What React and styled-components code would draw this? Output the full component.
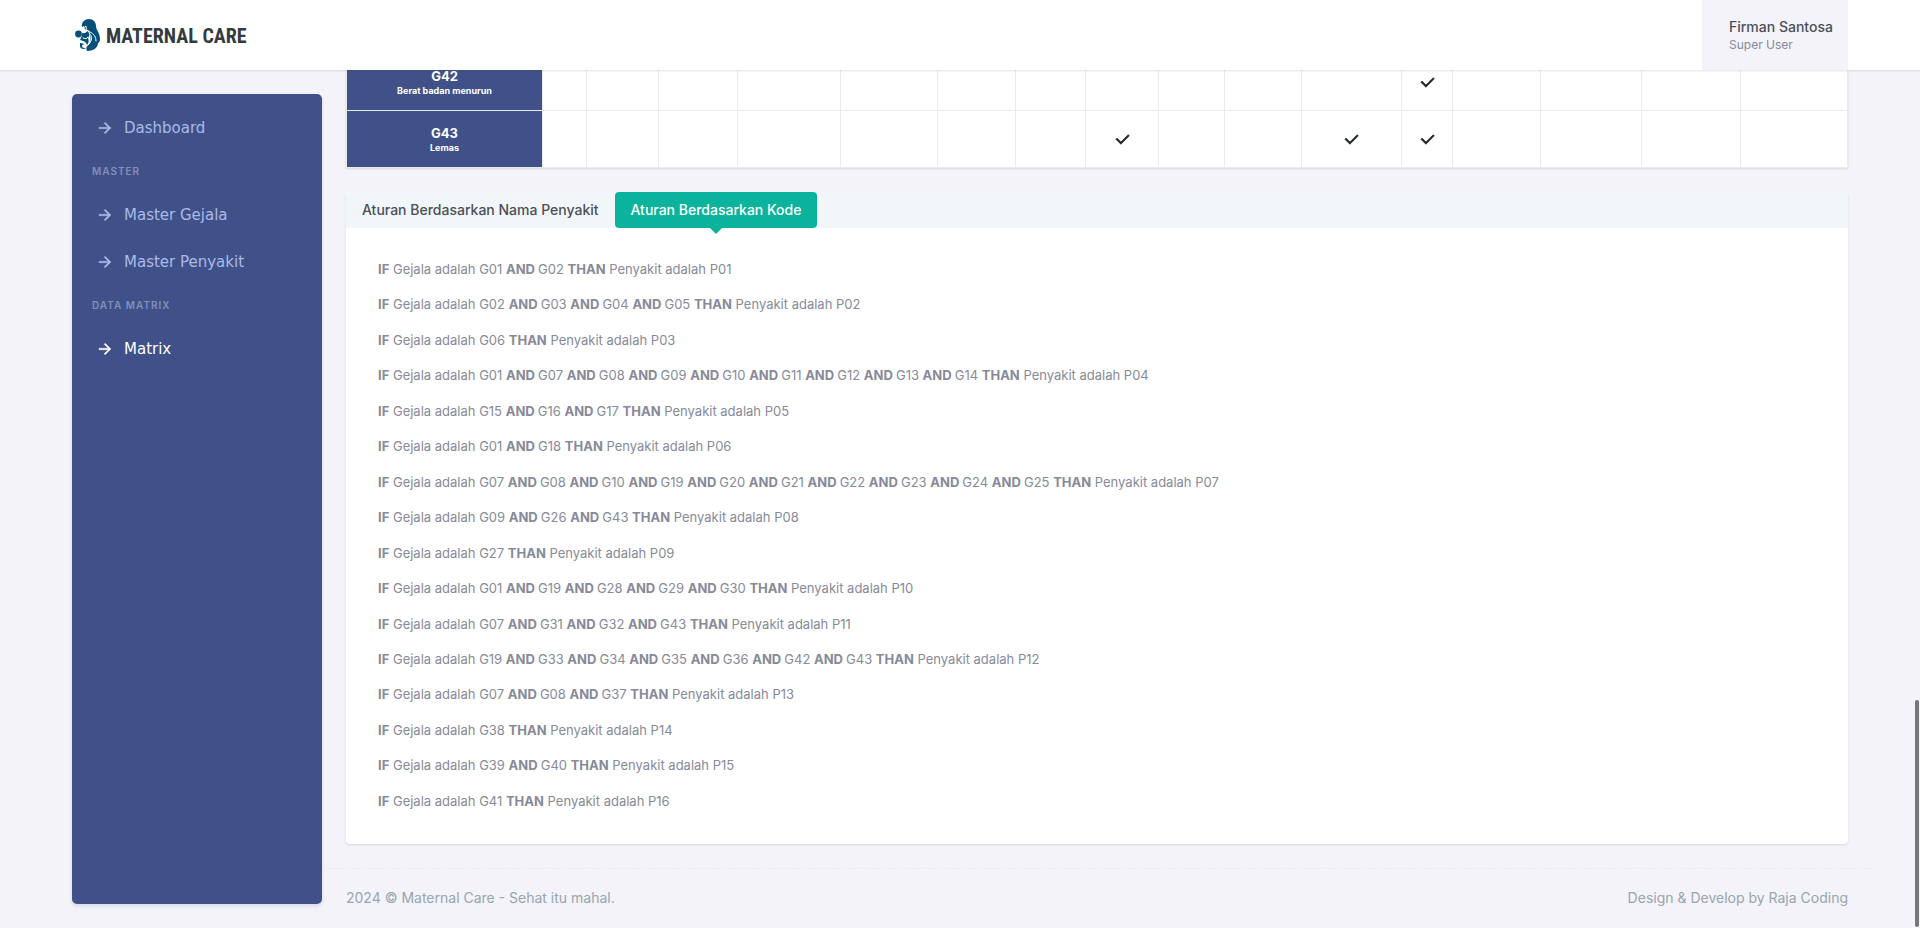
import React, { useState } from "react";
import styled, { createGlobalStyle } from "styled-components";

const GlobalStyle = createGlobalStyle`
  *, *::before, *::after { box-sizing: border-box; }
  html, body, #root { height: 100%; }
  body {
    margin: 0;
    overflow: hidden;
    background: #f3f3f9;
    color: #212529;
    font-family: Inter, "Open Sans", sans-serif;
    font-size: 13px;
    line-height: 20px;
  }
`;

const Page = styled.div`
  display: grid;
  grid-template-rows: 70px minmax(0, 1fr);
  height: 100vh;
`;

const Topbar = styled.header`
  position: relative;
  z-index: 2;
  display: flex;
  justify-content: space-between;
  padding: 0 72px;
  background: #fff;
  box-shadow: 0 1px 2px rgba(56, 65, 74, 0.15);
`;

const Brand = styled.a`
  display: flex;
  align-items: center;
  gap: 5px;
  padding: 1px 0 0 3px;
  color: #343a40;
  font-family: "Roboto Condensed", Roboto, sans-serif;
  font-size: 20px;
  font-weight: 700;
  line-height: 24px;
  text-decoration: none;
`;

const UserButton = styled.button`
  display: flex;
  flex-direction: column;
  justify-content: center;
  min-width: 146px;
  padding: 2px 15px 0 27px;
  border: 0;
  background: #f3f3f9;
  font: inherit;
  text-align: left;
`;

const UserName = styled.span`
  color: #495057;
  font-size: 14px;
  font-weight: 500;
  line-height: 18px;
`;

const UserRole = styled.span`
  color: #878a99;
  font-size: 12px;
  line-height: 18px;
`;

const Body = styled.div`
  display: grid;
  grid-template-columns: 250px minmax(0, 1fr);
  gap: 24px;
  min-height: 0;
  padding: 0 72px;
`;

const Sidebar = styled.nav`
  align-self: stretch;
  margin: 24px 0;
  padding: 10px 0;
  border-radius: 5px;
  background: #405189;
  box-shadow: 0 2px 4px rgba(15, 34, 58, 0.12);
`;

const MenuTitle = styled.h2`
  margin: 0;
  padding: 0 20px;
  color: #838fb9;
  font-size: 10px;
  font-weight: 600;
  letter-spacing: 1px;
  line-height: 40px;
  text-transform: uppercase;
`;

const MenuLink = styled.a`
  display: flex;
  align-items: center;
  gap: 10px;
  height: 47px;
  padding: 0 24px;
  color: ${(p) => (p.$active ? "#fff" : "#abb9e8")};
  font-family: "DejaVu Sans", sans-serif;
  font-size: 15px;
  text-decoration: none;
`;

const Main = styled.main`
  display: flex;
  flex-direction: column;
  min-width: 0;
`;

const TableCard = styled.section`
  height: 98px;
  display: flex;
  flex-direction: column;
  justify-content: flex-end;
  background: #fff;
  box-shadow: 0 1px 2px rgba(56, 65, 74, 0.15);
`;

const Matrix = styled.table`
  width: 100%;
  border-collapse: collapse;
  table-layout: fixed;
`;

const Code = styled.th`
  height: 57px;
  padding: 0 10px;
  border: 1px solid #e9ebec;
  background: #405189;
  color: #fff;
  font-weight: 700;
  line-height: 18px;
`;

const Symptom = styled.small`
  display: block;
  font-size: 9px;
  line-height: 12px;
`;

const Cell = styled.td`
  padding: 0;
  border: 1px solid #e9ebec;
  text-align: center;

  svg { display: block; margin: 0 auto; }
`;

const Card = styled.section`
  margin-top: 24px;
  border-radius: 4px;
  background: #fff;
  box-shadow: 0 1px 2px rgba(56, 65, 74, 0.15);
`;

const Tabs = styled.div`
  display: flex;
  background: #f3f6f9;
`;

const Tab = styled.button`
  position: relative;
  height: 36px;
  padding: 0 16px;
  border: 0;
  border-radius: 4px;
  background: ${(p) => (p.$active ? "#0ab39c" : "transparent")};
  color: ${(p) => (p.$active ? "#fff" : "#495057")};
  font: inherit;
  font-size: 14px;
  font-weight: 500;

  &::after {
    content: "";
    display: ${(p) => (p.$active ? "block" : "none")};
    position: absolute;
    top: 100%;
    left: 50%;
    margin-left: -6px;
    border: 6px solid transparent;
    border-top-color: #0ab39c;
    border-bottom: 0;
  }
`;

const Rules = styled.ul`
  display: flex;
  flex-direction: column;
  justify-content: space-between;
  min-height: 616px;
  margin: 0;
  padding: 31px 32px 33px;
  list-style: none;
  color: #878a99;
`;

const Rule = styled.li`
  line-height: 20px;
`;

const Footer = styled.footer`
  display: flex;
  justify-content: space-between;
  margin: 24px -24px 0;
  padding: 19px 24px 18px;
  border-top: 1px dashed #e9ebec;
  color: #98a6ad;
  font-size: 14px;
`;

const ScrollThumb = styled.div`
  position: fixed;
  z-index: 3;
  right: 1px;
  bottom: 1px;
  width: 4px;
  height: 227px;
  border-radius: 2px;
  background: #777;
`;

const columns = [196, 44, 72, 79, 103, 97, 78, 70, 73, 66, 77, 100, 51, 88, 101, 99, 107];
const total = columns.reduce((a, b) => a + b, 0);

const Col = styled.col`
  width: ${(p) => (p.$share * 100) / total}%;
`;

const rows = [
  { code: "G42", name: "Berat badan menurun", checks: [12] },
  { code: "G43", name: "Lemas", checks: [8, 11, 12] },
];

const rules = [
  ["01", "02"],
  ["02", "03", "04", "05"],
  ["06"],
  ["01", "07", "08", "09", "10", "11", "12", "13", "14"],
  ["15", "16", "17"],
  ["01", "18"],
  ["07", "08", "10", "19", "20", "21", "22", "23", "24", "25"],
  ["09", "26", "43"],
  ["27"],
  ["01", "19", "28", "29", "30"],
  ["07", "31", "32", "43"],
  ["19", "33", "34", "35", "36", "42", "43"],
  ["07", "08", "37"],
  ["38"],
  ["39", "40"],
  ["41"],
];

const menu = [
  { link: "Dashboard" },
  { title: "Master" },
  { link: "Master Gejala" },
  { link: "Master Penyakit" },
  { title: "Data Matrix" },
  { link: "Matrix", active: true },
];

const tabs = ["Aturan Berdasarkan Nama Penyakit", "Aturan Berdasarkan Kode"];

const ArrowIcon = () => (
  <svg width="18" height="18" viewBox="0 0 24 24" fill="currentColor" stroke="currentColor" strokeWidth="0.5" aria-hidden="true">
    <path d="M16.172 11l-5.364-5.364 1.414-1.414L20 12l-7.778 7.778-1.414-1.414L16.172 13H4v-2z" />
  </svg>
);

const CheckIcon = () => (
  <svg width="19" height="19" viewBox="0 0 24 24" fill="currentColor" stroke="currentColor" strokeWidth="0.9" role="img" aria-label="Ya">
    <path d="M10 15.172l9.192-9.193 1.415 1.414L10 18l-6.364-6.364 1.414-1.414z" />
  </svg>
);

const LogoMark = () => (
  <svg width="26" height="33" viewBox="0 0 26 33" aria-hidden="true">
    <g fill="#05507a">
      <path d="M7 8C6 3 10 0 14 0c4 0 7 3 7 7 0 4 4 7 4 13 0 2-1 4-2 4 0 5-5 8-11 8-1-2-1-4 1-6 3-3 3-6 2-10 0-3-1-4-2-5-2 0-4-1-4-4z" />
      <circle cx="3.5" cy="15" r="3.4" />
      <path d="M7 14c3 1 4-1 6-2 2 2 2 5 0 7 1 2 1 5-1 7-1-4-4-4-7-5 1-2 1-3 2-4z" />
      <path d="M5 24c3 0 4 1 5 2-2-1-3 0-3 1 0 2 2 2 4 2-2 2-6 1-6-2z" />
    </g>
    <g fill="none" stroke="#fff" strokeLinecap="round">
      <path d="M6 9c3 0 4-1 5-2 0 3 1 5 4 6 4 2 6 5 6 9" />
      <path d="M14 14c4 3 3 9-1 12" />
      <path d="M8 19c2 1 4 1 5-1" />
    </g>
  </svg>
);

export default function App() {
  const [tab, setTab] = useState(1);
  return (
    <Page>
      <GlobalStyle />
      <Topbar>
        <Brand href="#">
          <LogoMark />
          MATERNAL CARE
        </Brand>
        <UserButton type="button">
          <UserName>Firman Santosa</UserName>
          <UserRole>Super User</UserRole>
        </UserButton>
      </Topbar>
      <Body>
        <Sidebar>
          {menu.map((m) =>
            m.title ? (
              <MenuTitle key={m.title}>{m.title}</MenuTitle>
            ) : (
              <MenuLink key={m.link} href="#" $active={m.active}>
                <ArrowIcon />
                {m.link}
              </MenuLink>
            )
          )}
        </Sidebar>
        <Main>
          <TableCard>
            <Matrix>
              <colgroup>
                {columns.map((w, i) => (
                  <Col key={i} $share={w} />
                ))}
              </colgroup>
              <tbody>
                {rows.map((r) => (
                  <tr key={r.code}>
                    <Code scope="row">
                      {r.code}
                      <Symptom>{r.name}</Symptom>
                    </Code>
                    {columns.slice(1).map((_, i) => (
                      <Cell key={i}>{r.checks.includes(i + 1) && <CheckIcon />}</Cell>
                    ))}
                  </tr>
                ))}
              </tbody>
            </Matrix>
          </TableCard>
          <Card>
            <Tabs role="tablist">
              {tabs.map((t, i) => (
                <Tab
                  key={t}
                  type="button"
                  role="tab"
                  aria-selected={tab === i}
                  $active={tab === i}
                  onClick={() => setTab(i)}
                >
                  {t}
                </Tab>
              ))}
            </Tabs>
            <Rules>
              {rules.map((codes, i) => (
                <Rule key={i}>
                  <b>IF</b> Gejala adalah{" "}
                  {codes.map((c, j) => (
                    <React.Fragment key={c}>
                      {j > 0 && <b>AND </b>}G{c}{" "}
                    </React.Fragment>
                  ))}
                  <b>THAN</b> Penyakit adalah P{String(i + 1).padStart(2, "0")}
                </Rule>
              ))}
            </Rules>
          </Card>
          <Footer>
            <span>2024 © Maternal Care - Sehat itu mahal.</span>
            <span>Design &amp; Develop by Raja Coding</span>
          </Footer>
        </Main>
      </Body>
      <ScrollThumb />
    </Page>
  );
}
